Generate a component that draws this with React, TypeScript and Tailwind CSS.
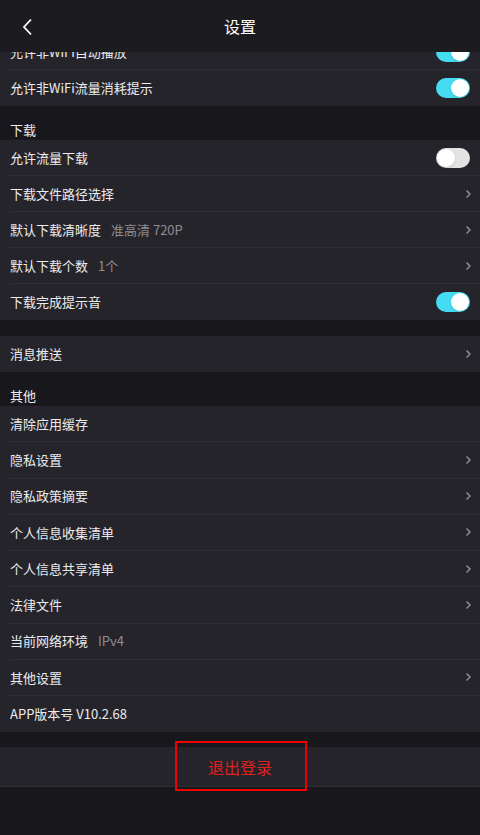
import { ReactNode } from "react";

const font = { fontFamily: '"Noto Sans CJK SC", "Noto Sans", sans-serif' };

function Toggle({ on }: { on: boolean }) {
  return (
    <div
      className={
        "relative mr-[2px] h-[20px] w-[34px] rounded-full " +
        (on ? "bg-[#45dcf2]" : "bg-[#e3e3e3]")
      }
    >
      <div
        className={
          "absolute top-[1px] h-[18px] w-[18px] rounded-full bg-white shadow " +
          (on ? "right-[1px]" : "left-[1px]")
        }
      />
    </div>
  );
}

function Chevron() {
  return (
    <svg width="8" height="10" viewBox="0 0 8 10">
      <path d="M2.5 1.5 L6 5 L2.5 8.5" stroke="#8a898f" strokeWidth="1.5" fill="none" />
    </svg>
  );
}

function Row({
  label,
  value,
  right,
  last,
  tall,
}: {
  label: string;
  value?: string;
  right?: ReactNode;
  last?: boolean;
  tall?: boolean;
}) {
  return (
    <div className="bg-[#25242a] pl-[10px]">
      <div
        className={
          "flex items-center pr-[8px] " +
          (tall ? "h-[36.25px] " : "h-[36px] ") +
          (last ? "" : "border-b border-[#2f2e34]")
        }
      >
        <span className="text-[13px] text-[#ececee]">{label}</span>
        {value && <span className="ml-[10px] text-[13px] text-[#8e8d93]">{value}</span>}
        <div className="ml-auto flex items-center">{right}</div>
      </div>
    </div>
  );
}

function Section({ title }: { title: string }) {
  return (
    <div className="flex h-[34px] items-end pb-[1px] pl-[10px] text-[13px] text-[#ececee]">
      {title}
    </div>
  );
}

export default function App() {
  return (
    <div className="flex h-[835px] w-[480px] flex-col overflow-hidden bg-[#18171c]" style={font}>
      <div className="relative z-10 flex h-[52px] shrink-0 items-center justify-center bg-[#1c1b20]">
        <svg width="12" height="18" viewBox="0 0 12 18" className="absolute left-[22px] top-[18px]">
          <path d="M9 1.5 L2 9 L9 16.5" stroke="#ffffff" strokeWidth="1.8" fill="none" />
        </svg>
        <span className="text-[16px] text-white">设置</span>
      </div>

      <div className="-mt-[18px] flex flex-col">
        <Row label="允许非WiFi自动播放" right={<Toggle on />} />
        <Row label="允许非WiFi流量消耗提示" right={<Toggle on />} last />

        <Section title="下载" />
        <Row label="允许流量下载" right={<Toggle on={false} />} />
        <Row label="下载文件路径选择" right={<Chevron />} />
        <Row label="默认下载清晰度" value="准高清 720P" right={<Chevron />} />
        <Row label="默认下载个数" value="1个" right={<Chevron />} />
        <Row label="下载完成提示音" right={<Toggle on />} last />

        <div className="h-[16px]" />
        <Row label="消息推送" right={<Chevron />} last />

        <Section title="其他" />
        <Row tall label="清除应用缓存" />
        <Row tall label="隐私设置" right={<Chevron />} />
        <Row tall label="隐私政策摘要" right={<Chevron />} />
        <Row tall label="个人信息收集清单" right={<Chevron />} />
        <Row tall label="个人信息共享清单" right={<Chevron />} />
        <Row tall label="法律文件" right={<Chevron />} />
        <Row tall label="当前网络环境" value="IPv4" />
        <Row tall label="其他设置" right={<Chevron />} />
        <Row tall label="APP版本号 V10.2.68" last />

        <div className="h-[15px]" />
        <div className="relative flex h-[40px] items-center justify-center border-b border-[#2f2e34] bg-[#25242a]">
          <span className="text-[16px] text-[#e0201f]">退出登录</span>
          <div className="absolute left-[175px] top-[-6px] h-[50px] w-[132px] border-2 border-[#ee0000]" />
        </div>
      </div>
    </div>
  );
}
